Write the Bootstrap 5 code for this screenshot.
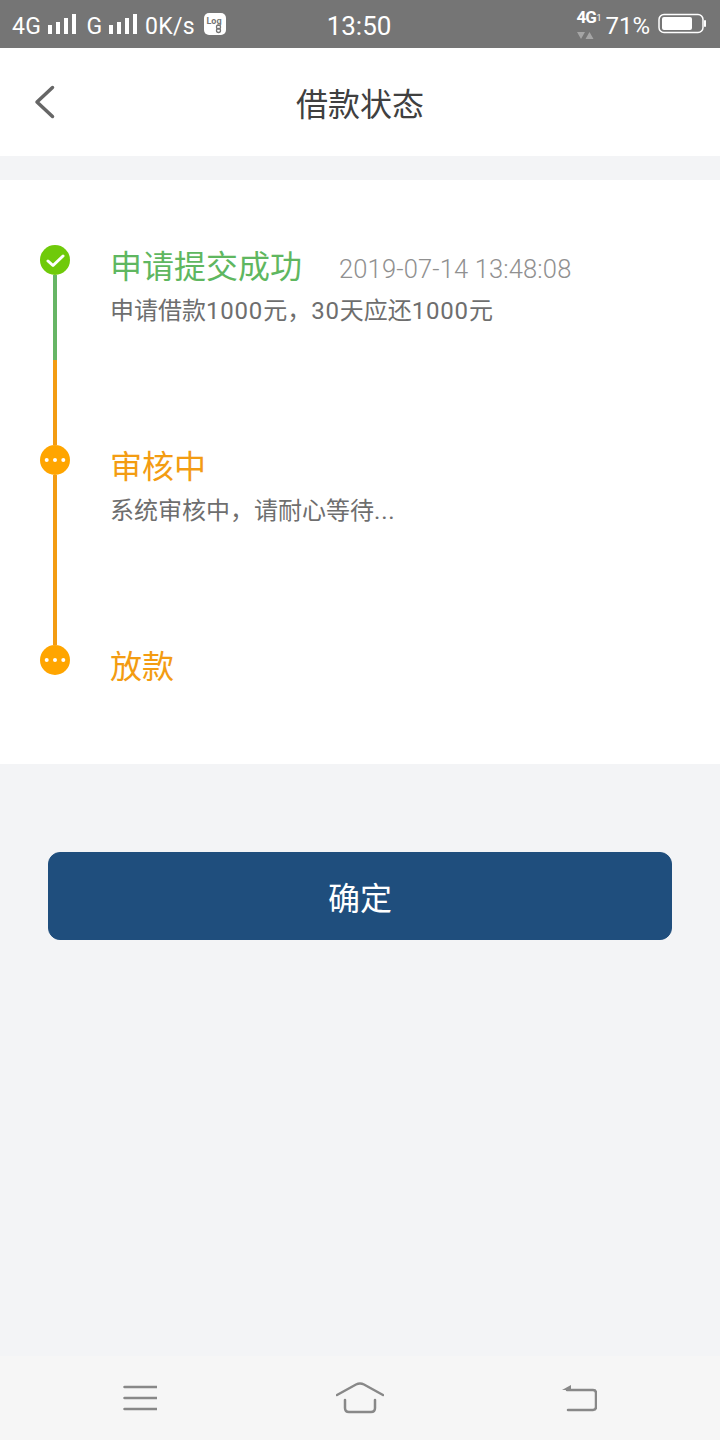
<!DOCTYPE html>
<html lang="zh">
<head>
<meta charset="utf-8">
<link href="https://cdn.jsdelivr.net/npm/bootstrap@5.3.0/dist/css/bootstrap.min.css" rel="stylesheet">
<style>
html,body{margin:0;height:1440px;background:#f3f4f6;font-family:"Roboto","Noto Sans CJK SC",sans-serif;}
.app-shell{height:1440px;overflow:hidden;}
.status-strip{height:48px;background:#757575;color:#fff;padding:4px 14px 0 12px;font-size:23px;line-height:1;}
.status-left{width:300px;}
.status-mid{font-size:26px;width:100px;text-align:center;margin-left:-3px;margin-top:-1px;}
.status-right{margin-left:auto;}
.net-badge{position:relative;width:24px;height:34px;margin-top:-4px;}
.net-label{position:absolute;left:0;top:2px;font-size:17px;font-weight:700;letter-spacing:-1px;}
.net-sim{position:absolute;left:20px;top:7px;font-size:9px;}
.title-bar{height:108px;background:#fff;position:relative;}
.title-bar h1{font-size:32px;color:#404040;font-weight:400;margin:0;font-family:"Noto Sans CJK SC",sans-serif;}
.back-link{position:absolute;left:32px;top:36px;line-height:0;}
.steps-panel{margin-top:24px;background:#fff;height:584px;padding-top:64px;}
.step-row{height:200px;position:relative;padding-left:110px;}
.step-row.last-step{height:120px;}
.step-dot{position:absolute;left:40px;top:1px;width:30px;height:30px;line-height:0;}
.step-line{position:absolute;left:53px;top:31px;width:4px;height:170px;background:#f39c12;}
.line-green{height:85px;background:#67b565;position:absolute;left:0;top:0;width:4px;}
.step-title{font-size:32px;line-height:40px;height:40px;font-family:"Noto Sans CJK SC",sans-serif;}
.t-green{color:#5fb760;}.t-orange{color:#f39c12;}
.step-time{font-size:25.500px;line-height:40px;color:#909090;margin:5px 0 0 37px;letter-spacing:.15px;font-family:"Roboto",sans-serif;font-weight:300;}
.step-desc{font-size:24px;line-height:32px;color:#6e6e6e;margin-top:11px;}
.step-num{letter-spacing:.8px;}
.ellipsis-dots{letter-spacing:.8px;}
.confirm-wrap{padding:88px 48px 0;}
.confirm-btn{height:88px;width:100%;background:#1f4e7d;border-color:#1f4e7d;border-radius:12px;color:#fff;font-size:32px;font-family:"Noto Sans CJK SC",sans-serif;}
.nav-strip{position:fixed;left:0;right:0;bottom:0;height:84px;background:#f6f6f6;}
.nav-strip svg{display:block;}
.nav-cell{width:220px;}
</style>
</head>
<body>
<div class="app-shell">
  <div class="status-strip d-flex align-items-center">
    <div class="status-left d-flex align-items-center">
      <span style="letter-spacing:.4px">4G</span>
      <svg width="30" height="22" viewBox="0 0 30 22" fill="#fff" style="margin-left:6px;margin-top:-4px"><rect x="1" y="12" width="4" height="9"/><rect x="9" y="9" width="4" height="12"/><rect x="17" y="5" width="4" height="16"/><rect x="25" y="1" width="4" height="20"/></svg>
      <span style="margin-left:9px">G</span>
      <svg width="30" height="22" viewBox="0 0 30 22" fill="#fff" style="margin-left:6px;margin-top:-4px"><rect x="1" y="12" width="4" height="9"/><rect x="9" y="9" width="4" height="12"/><rect x="17" y="5" width="4" height="16"/><rect x="25" y="1" width="4" height="20"/></svg>
      <span style="margin-left:7px;letter-spacing:.3px">0K/s</span>
      <svg width="22" height="22" viewBox="0 0 22 22" style="margin-left:9px;margin-top:-5px"><rect width="22" height="22" rx="5" fill="#fff"/><text x="2.500" y="11" font-size="9" font-weight="700" font-family="Roboto" fill="#757575">Log</text><circle cx="14.500" cy="14" r="2" fill="none" stroke="#757575" stroke-width="1.300"/><circle cx="14.500" cy="17.500" r="2" fill="none" stroke="#757575" stroke-width="1.300"/></svg>
    </div>
    <div class="status-mid">13:50</div>
    <div class="status-right d-flex align-items-center">
      <div class="net-badge">
        <span class="net-label">4G</span><span class="net-sim">1</span>
        <svg width="24" height="12" viewBox="0 0 24 12" style="position:absolute;left:0;top:22px"><path d="M1 3h8l-4 7zM9.500 10l4-7 4 7z" fill="#a5a5a5"/></svg>
      </div>
      <span style="font-size:24px;margin-left:5px;margin-top:-1px">71%</span>
      <svg width="48" height="22" viewBox="0 0 48 22" style="margin-left:8px;margin-top:-5px"><rect x="1" y="1.500" width="44" height="18" rx="5" fill="none" stroke="#fff" stroke-width="1.500"/><rect x="4" y="4" width="30" height="13" rx="2" fill="#fff"/><rect x="46" y="7" width="2" height="7" rx="1" fill="#fff"/></svg>
    </div>
  </div>
  <div class="title-bar d-flex align-items-center justify-content-center">
    <a class="back-link" href="#" aria-label="返回"><svg width="24" height="36" viewBox="0 0 24 36"><path d="M20.500 3.500L5 18l15.500 14.500" fill="none" stroke="#666" stroke-width="3.500" stroke-linecap="round" stroke-linejoin="round"/></svg></a>
    <h1>借款状态</h1>
  </div>
  <div class="steps-panel">
    <div class="step-row">
      <div class="step-line"><div class="line-green"></div></div>
      <svg class="step-dot" viewBox="0 0 30 30"><circle cx="15" cy="15" r="15" fill="#6fca0a"/><path d="M8 16l5 4.500L23 11" fill="none" stroke="#fff" stroke-width="3" stroke-linecap="round" stroke-linejoin="round"/></svg>
      <div class="step-title t-green d-flex align-items-start">申请提交成功<span class="step-time">2019-07-14 13:48:08</span></div>
      <div class="step-desc">申请借款<span class="step-num">1000</span>元，<span class="step-num">30</span>天应还<span class="step-num">1000</span>元</div>
    </div>
    <div class="step-row">
      <div class="step-line"></div>
      <svg class="step-dot" viewBox="0 0 30 30"><circle cx="15" cy="15" r="15" fill="#ffa500"/><circle cx="6.700" cy="15" r="2" fill="#fff"/><circle cx="15" cy="15" r="2" fill="#fff"/><circle cx="23.300" cy="15" r="2" fill="#fff"/></svg>
      <div class="step-title t-orange">审核中</div>
      <div class="step-desc">系统审核中，请耐心等待<span class="ellipsis-dots">...</span></div>
    </div>
    <div class="step-row last-step">
      <svg class="step-dot" viewBox="0 0 30 30"><circle cx="15" cy="15" r="15" fill="#ffa500"/><circle cx="6.700" cy="15" r="2" fill="#fff"/><circle cx="15" cy="15" r="2" fill="#fff"/><circle cx="23.300" cy="15" r="2" fill="#fff"/></svg>
      <div class="step-title t-orange">放款</div>
    </div>
  </div>
  <div class="confirm-wrap"><button type="button" class="btn confirm-btn">确定</button></div>
  <div class="nav-strip d-flex align-items-center justify-content-center">
    <div class="nav-cell d-flex justify-content-center"><svg width="34" height="26" viewBox="0 0 34 26"><path d="M1.500 2h32M1.500 13h32M1.500 24h32" stroke="#888" stroke-width="2.500" stroke-linecap="round"/></svg></div>
    <div class="nav-cell d-flex justify-content-center"><svg width="48" height="32" viewBox="0 0 48 32"><path d="M1 13L20 2.500q4-2 8 0L47 13M9 18v8q0 4 4 4h22q4 0 4-4v-8" fill="none" stroke="#888" stroke-width="2.500" stroke-linecap="round"/></svg></div>
    <div class="nav-cell d-flex justify-content-center"><svg width="36" height="28" viewBox="0 0 36 28" style="margin-left:-2px"><path d="M6 6h26q3 0 3 3v14q0 3-3 3H7" fill="none" stroke="#888" stroke-width="2.500" stroke-linecap="round"/><path d="M1 6l9-5v5z" fill="#888"/></svg></div>
  </div>
</div>
</body>
</html>
